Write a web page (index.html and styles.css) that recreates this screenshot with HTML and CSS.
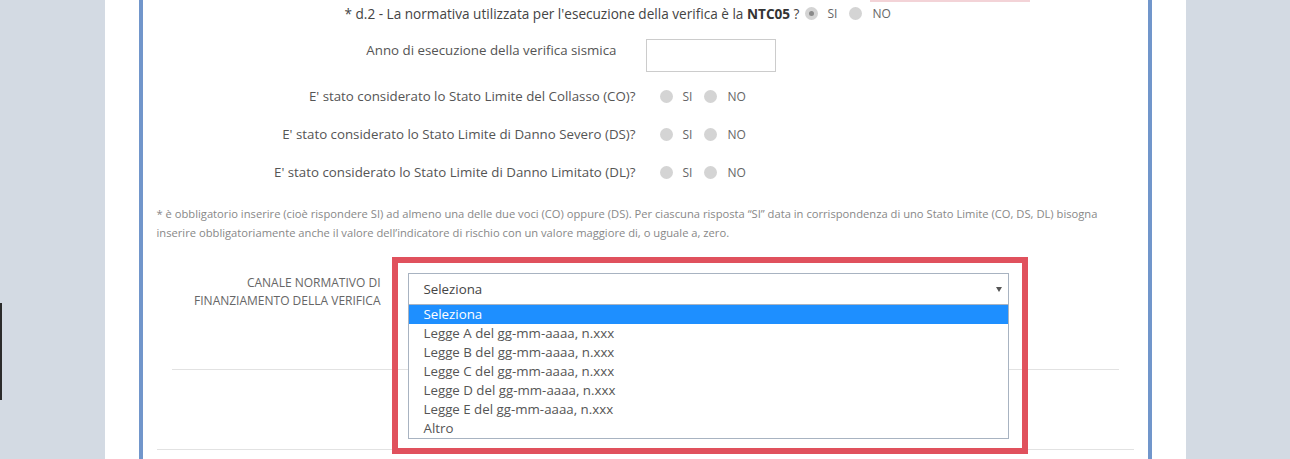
FILE: index.html
```html
<!DOCTYPE html>
<html lang="it">
<head>
    <meta charset="UTF-8">
    <meta name="viewport" content="width=device-width, initial-scale=1.0">
    <title>Verifica sismica</title>
  <link rel="stylesheet" href="styles.css">
</head>
<body>
    <div class="edge-bar"></div>
    <div class="top-mark"></div>

    <div class="page">
        <div class="panel">
            <div class="row row-top">
                <div class="label label-top">* d.2 - La normativa utilizzata per l'esecuzione della verifica è la <b>NTC05</b> ?</div>
                <div class="radios">
                    <span class="radio checked"></span><span class="opt">SI</span>
                    <span class="radio"></span><span class="opt">NO</span>
                </div>
            </div>

            <div class="row row-year">
                <div class="label label-year">Anno di esecuzione della verifica sismica</div>
                <input type="text" class="year-input">
            </div>

            <div class="row row-check first">
                <div class="label label-check">E' stato considerato lo Stato Limite del Collasso (CO)?</div>
                <div class="radios">
                    <span class="radio"></span><span class="opt">SI</span>
                    <span class="radio"></span><span class="opt">NO</span>
                </div>
            </div>
            <div class="row row-check">
                <div class="label label-check">E' stato considerato lo Stato Limite di Danno Severo (DS)?</div>
                <div class="radios">
                    <span class="radio"></span><span class="opt">SI</span>
                    <span class="radio"></span><span class="opt">NO</span>
                </div>
            </div>
            <div class="row row-check">
                <div class="label label-check">E' stato considerato lo Stato Limite di Danno Limitato (DL)?</div>
                <div class="radios">
                    <span class="radio"></span><span class="opt">SI</span>
                    <span class="radio"></span><span class="opt">NO</span>
                </div>
            </div>

            <p class="note">* è obbligatorio inserire (cioè rispondere SI) ad almeno una delle due voci (CO) oppure (DS). Per ciascuna risposta “SI” data in corrispondenza di uno Stato Limite (CO, DS, DL) bisogna inserire obbligatoriamente anche il valore dell’indicatore di rischio con un valore maggiore di, o uguale a, zero.</p>

            <div class="funding">
                <div class="funding-label">Canale normativo di<br>finanziamento della verifica</div>
                <div class="select-wrap">
                    <div class="select">
                        <span>Seleziona</span>
                        <svg width="6" height="5" viewBox="0 0 6 5"><polygon points="0,0 6,0 3,5" fill="#555"/></svg>
                    </div>
                    <ul class="select-list">
                        <li class="active">Seleziona</li>
                        <li>Legge A del gg-mm-aaaa, n.xxx</li>
                        <li>Legge B del gg-mm-aaaa, n.xxx</li>
                        <li>Legge C del gg-mm-aaaa, n.xxx</li>
                        <li>Legge D del gg-mm-aaaa, n.xxx</li>
                        <li>Legge E del gg-mm-aaaa, n.xxx</li>
                        <li>Altro</li>
                    </ul>
                    <div class="callout"></div>
                </div>
            </div>

            <div class="rule rule-inset"></div>
            <div class="rule rule-full"></div>
        </div>
    </div>
</body>
</html>
```

FILE: styles.css
```css
* {
    margin: 0;
    padding: 0;
    box-sizing: border-box;
}

body {
    font-family: "Open Sans", Arial, sans-serif;
    background-color: #d3dae3;
    height: 100vh;
    overflow: hidden;
    position: relative;
}

.edge-bar {
    position: absolute;
    left: 0;
    top: 303px;
    width: 2px;
    height: 97px;
    background-color: #2b2b2b;
}

.top-mark {
    position: absolute;
    left: 870px;
    top: 0;
    width: 160px;
    height: 2px;
    background-color: #f3d3d7;
}

.page {
    width: 1081px;
    height: 100%;
    margin: 0 auto;
    padding: 0 34px;
    background-color: #fff;
}

.panel {
    height: 100%;
    padding: 0 14px;
    border-left: 4px solid #7196cb;
    border-right: 4px solid #7196cb;
}

.row {
    display: flex;
}

.label {
    text-align: right;
    font-size: 13.3px;
    color: #555;
}

/* top question */
.row-top {
    height: 26px;
    align-items: center;
}

.label-top {
    width: 643px;
    font-size: 13.6px;
    color: #444;
}

.label-top b {
    color: #333;
}

.row-top .radios {
    margin-left: 5px;
}

/* year */
.row-year {
    margin-top: 13px;
    align-items: flex-start;
}

.label-year {
    width: 460px;
    line-height: 20px;
    padding-top: 1px;
}

.year-input {
    margin-left: 29px;
    width: 130px;
    height: 33px;
    border: 1px solid #ccc;
    outline: none;
}

/* limit states */
.row-check {
    height: 38px;
    align-items: center;
}

.row-check.first {
    margin-top: 5px;
}

.label-check {
    width: 479px;
}

.row-check .radios {
    margin-left: 24px;
}

.radios {
    display: flex;
    align-items: center;
    font-size: 12px;
    color: #666;
}

.radio {
    width: 13px;
    height: 13px;
    border-radius: 50%;
    background-color: #d4d4d4;
    margin-right: 10px;
    display: flex;
    align-items: center;
    justify-content: center;
}

.radio.checked::after {
    content: "";
    width: 5px;
    height: 5px;
    border-radius: 50%;
    background-color: #8a8a8a;
}

.opt {
    margin-right: 12px;
}

.note {
    margin-top: 13px;
    font-size: 11.2px;
    line-height: 19px;
    color: #888;
}

/* funding channel */
.funding {
    margin-top: 31px;
    height: 32px;
    display: flex;
    align-items: flex-start;
}

.funding-label {
    width: 224px;
    margin-right: 27px;
    padding-top: 1px;
    text-align: right;
    font-size: 12px;
    line-height: 18px;
    text-transform: uppercase;
    color: #666;
}

.select-wrap {
    position: relative;
    width: 601px;
}

.select {
    height: 32px;
    padding: 0 6px 0 15px;
    border: 1px solid #a8b3c1;
    display: flex;
    align-items: center;
    justify-content: space-between;
    font-size: 13.3px;
    color: #444;
}

.select-list {
    position: absolute;
    top: 100%;
    left: 0;
    right: 0;
    background-color: #fff;
    border: 1px solid #a8b3c1;
    border-top: none;
    z-index: 2;
}

.select-list li {
    list-style: none;
    height: 19px;
    line-height: 19px;
    padding-left: 15px;
    font-size: 13.3px;
    color: #555;
}

.select-list li.active {
    background-color: #1e8fff;
    color: #fff;
}

.callout {
    position: absolute;
    top: -16px;
    left: -16px;
    width: 636px;
    height: 197px;
    border: 6px solid #e0515d;
    z-index: 3;
    pointer-events: none;
}

.rule {
    height: 1px;
    background-color: #e2e2e2;
}

.rule-inset {
    margin: 64px 15px 0;
}

.rule-full {
    margin-top: 79px;
}
```
